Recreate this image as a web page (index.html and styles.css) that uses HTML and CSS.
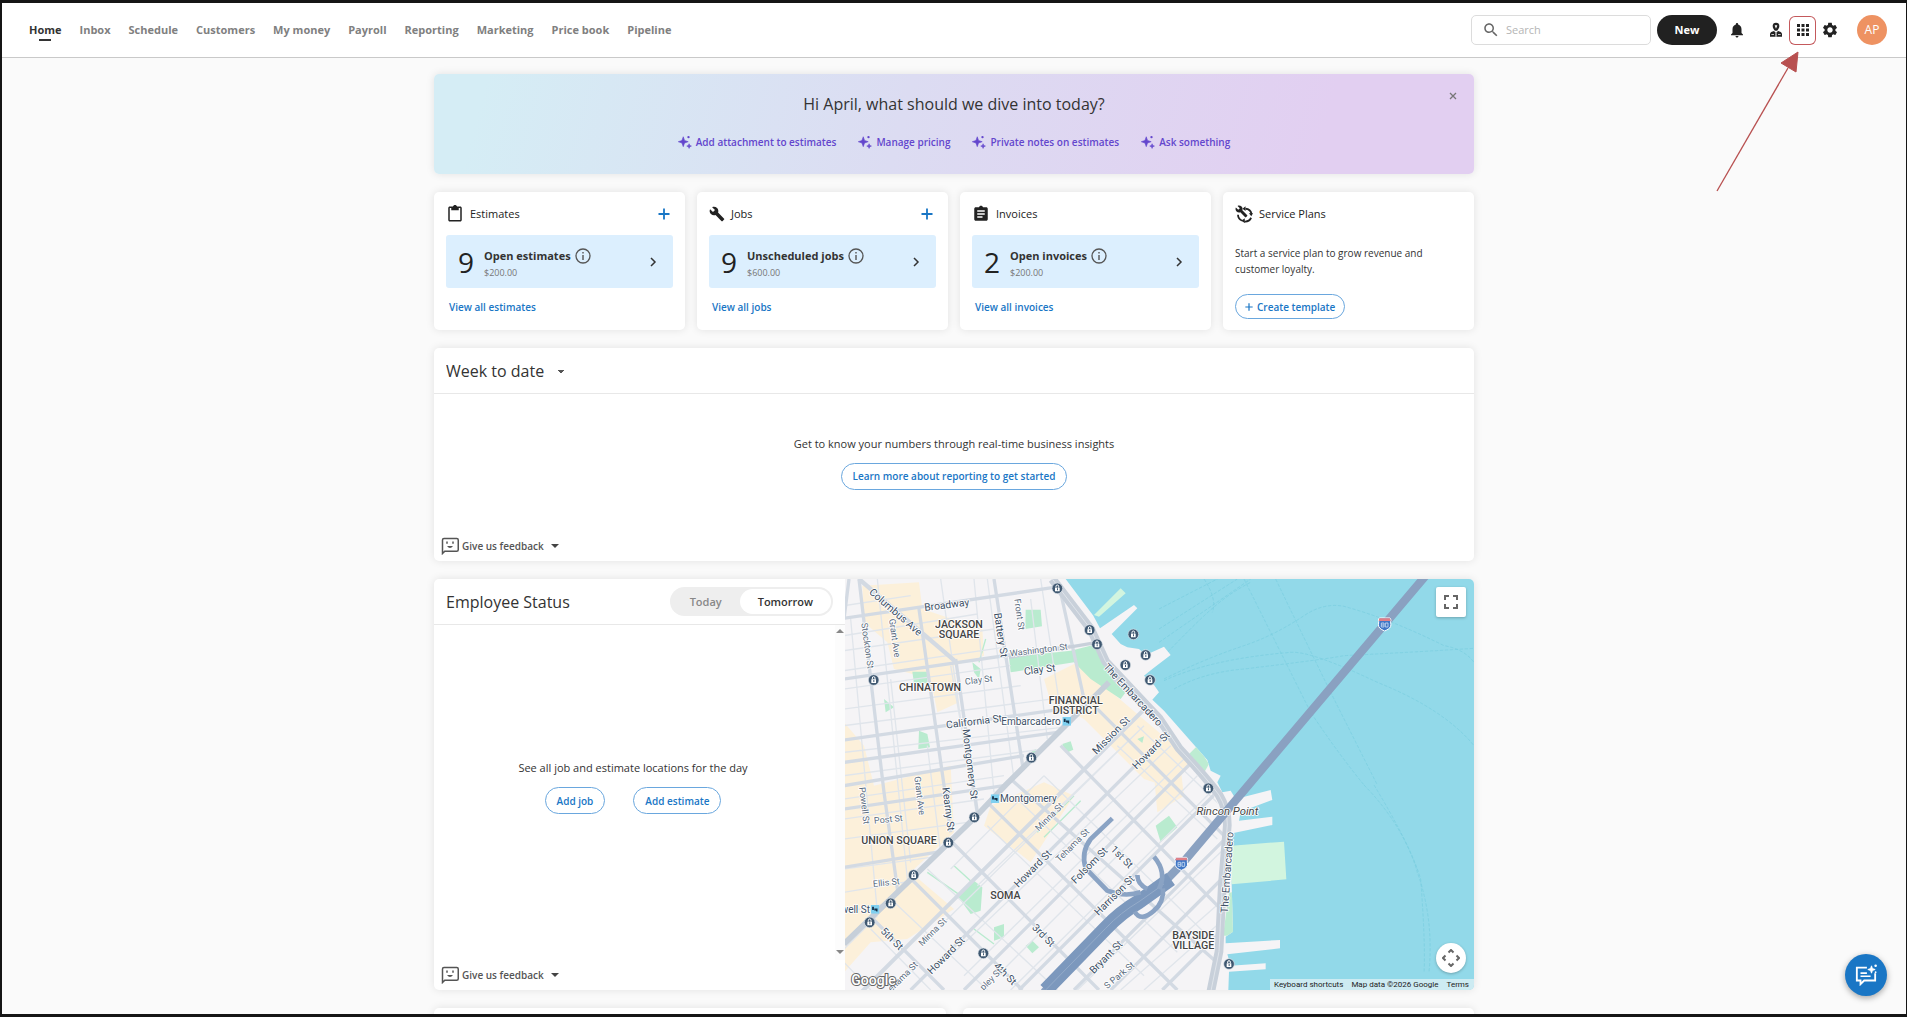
FILE: index.html
```html
<!DOCTYPE html>
<html lang="en">
<head>
<meta charset="utf-8">
<meta name="viewport" content="width=device-width, initial-scale=1">
<title>Home</title>
<link rel="stylesheet" href="styles.css">
</head>
<body>
<svg class="defs" aria-hidden="true">
  <symbol id="sparkle" viewBox="0 0 24 24"><path d="M9 3l2.200 6.300L17.500 11.500l-6.300 2.200L9 20l-2.200-6.300L.5 11.500l6.300-2.200z" stroke="currentColor"/><path d="M19 15l1 3 3 1-3 1-1 3-1-3-3-1 3-1z" stroke="currentColor"/><circle cx="18" cy="3.500" r="2"/></symbol>
  <symbol id="feedback" viewBox="0 0 24 24"><path d="M2 22V4a2 2 0 0 1 2-2h17a2 2 0 0 1 2 2v13a2 2 0 0 1-2 2H5z" fill="none" stroke="currentColor" stroke-width="2"/><path d="M7 6h2v3H7zM15 6h2v3h-2zM8 12h8q-4 5-8 0z"/></symbol>
  <symbol id="info" viewBox="0 0 16 16"><circle cx="8" cy="8" r="7" fill="none" stroke="currentColor" stroke-width="1.300"/><path d="M7.300 7h1.400v5H7.300zM7.300 4h1.400v1.500H7.300z"/></symbol>
  <symbol id="plus" viewBox="0 0 12 12"><path d="M6 .5v11M.5 6h11" stroke="currentColor" stroke-width="1.800"/></symbol>
  <symbol id="chevron" viewBox="0 0 12 12"><path d="M4 2l4 4-4 4" fill="none" stroke="currentColor" stroke-width="1.500"/></symbol>
  <symbol id="pin" viewBox="-18 -18 36 36"><circle r="16" fill="#3f5871" stroke="#dfe5ec" stroke-width="2"/><path d="M-7-2h14V9H-7z" fill="#fff"/><path d="M-4-2v-4a4 4 0 0 1 8 0v4" fill="none" stroke="#fff" stroke-width="3"/><path d="M-1 0h3v6h-3z" fill="#3f5871"/></symbol>
  <symbol id="shield" viewBox="0 0 44 44"><path d="M6 3h32l3 6c-3 6 1 12-1 19-3 8-12 11-18 14C16 39 7 36 4 28c-2-7 2-13-1-19z" fill="#3f76c6" stroke="#fff" stroke-width="3"/><path d="M6 4h32l2 8H4z" fill="#df7f88"/><path d="M12 18h8v12h-8zM12 24h8M24 18h8v12h-8z" fill="none" stroke="#b5cdec" stroke-width="3"/></symbol>
  <symbol id="transit" viewBox="0 0 24 24"><path d="M0 0h24v24H0z" fill="#7fd0f0"/><path d="M4 5h5v9H4zM10 10h9v8h-3l-2-3h-4z" fill="#16324a"/></symbol>
</svg>
<div class="app">
  <header class="topbar">
    <nav class="nav" aria-label="Main">
      <a class="nav-link active" href="#home" aria-current="page">Home</a>
      <a class="nav-link" href="#inbox">Inbox</a>
      <a class="nav-link" href="#schedule">Schedule</a>
      <a class="nav-link" href="#customers">Customers</a>
      <a class="nav-link" href="#money">My money</a>
      <a class="nav-link" href="#payroll">Payroll</a>
      <a class="nav-link" href="#reporting">Reporting</a>
      <a class="nav-link" href="#marketing">Marketing</a>
      <a class="nav-link" href="#pricebook">Price book</a>
      <a class="nav-link" href="#pipeline">Pipeline</a>
    </nav>
    <div class="tools">
      <label class="search">
        <svg class="icon-18" viewBox="0 0 24 24" aria-hidden="true"><path d="M15.500 14h-.79l-.28-.27C15.410 12.590 16 11.110 16 9.500 16 5.910 13.090 3 9.500 3S3 5.910 3 9.500 5.910 16 9.500 16c1.610 0 3.090-.59 4.230-1.570l.27.28v.79l5 4.990L20.490 19l-4.990-5zm-6 0C7.010 14 5 11.990 5 9.500S7.010 5 9.500 5 14 7.010 14 9.500 11.990 14 9.500 14z"/></svg>
        <input type="search" placeholder="Search" aria-label="Search">
      </label>
      <button class="new" type="button">New</button>
      <button class="icon-btn" type="button" aria-label="Notifications"><svg class="icon-18" viewBox="0 0 24 24"><path d="M12 22c1.100 0 2-.9 2-2h-4c0 1.100.89 2 2 2zm6-6v-5c0-3.070-1.640-5.640-4.500-6.320V4c0-.83-.67-1.500-1.500-1.500s-1.500.67-1.500 1.500v.68C7.630 5.360 6 7.920 6 11v5l-2 2v1h16v-1l-2-2z"/></svg></button>
      <div class="icon-group">
        <button class="icon-btn" type="button" aria-label="Technicians"><svg class="icon-16" viewBox="0 0 24 24"><path d="M12 1a5 5 0 0 1 5 5c0 3-2 6-3.500 7h-3C9 12 7 9 7 6a5 5 0 0 1 5-5z"/><path d="M10 5h4l-2 5z" fill="#fff"/><path d="M3 22v-4c0-2 3-4 6-4.500l3 3 3-3c3 .5 6 2.500 6 4.500v4z"/><path d="M11.200 16h1.600v6h-1.600zM5 18h4v1H5zM15 18h4v1h-4z" fill="#fff"/></svg></button>
        <div class="callout">
          <button class="icon-btn" type="button" aria-label="Apps"><svg class="icon-18" viewBox="0 0 24 24"><path d="M4 8h4V4H4v4zm6 12h4v-4h-4v4zm-6 0h4v-4H4v4zm0-6h4v-4H4v4zm6 0h4v-4h-4v4zm6-10v4h4V4h-4zm-6 4h4V4h-4v4zm6 6h4v-4h-4v4zm0 6h4v-4h-4v4z"/></svg></button>
          <svg class="arrow" viewBox="0 0 84 142" aria-hidden="true"><path d="M1 141L72 18" stroke="#b85050" stroke-width="1.300"/><path d="M82 2L65 13l15 9z" fill="#b85050" stroke="#b85050"/></svg>
        </div>
        <button class="icon-btn" type="button" aria-label="Settings"><svg class="icon-18" viewBox="0 0 24 24"><path d="M19.140 12.940c.04-.3.060-.61.060-.94 0-.32-.02-.64-.07-.94l2.030-1.580c.18-.14.230-.41.120-.61l-1.920-3.320c-.12-.22-.37-.29-.59-.22l-2.390.96c-.5-.38-1.030-.7-1.620-.94l-.36-2.540c-.04-.24-.24-.41-.48-.41h-3.840c-.24 0-.43.17-.47.41l-.36 2.540c-.59.240-1.130.57-1.620.94l-2.390-.96c-.22-.08-.47 0-.59.22L2.740 8.870c-.12.210-.08.470.120.610l2.030 1.580c-.05.3-.09.630-.09.940s.02.640.07.940l-2.030 1.580c-.18.140-.23.410-.12.610l1.920 3.320c.12.220.370.290.590.220l2.390-.96c.5.380 1.030.7 1.620.94l.36 2.540c.05.240.240.410.480.410h3.840c.24 0 .44-.17.470-.41l.36-2.540c.59-.24 1.130-.56 1.620-.94l2.390.96c.22.080.470 0 .59-.22l1.920-3.320c.12-.22.070-.47-.12-.61l-2.010-1.580zM12 15.600c-1.980 0-3.600-1.620-3.600-3.600s1.620-3.600 3.600-3.600 3.600 1.620 3.600 3.600-1.620 3.600-3.600 3.600z"/></svg></button>
      </div>
      <button class="avatar" type="button" aria-label="Account">AP</button>
    </div>
  </header>

  <main class="main">
    <section class="banner">
      <h1 class="title">Hi April, what should we dive into today?</h1>
      <div class="prompts">
        <button class="prompt" type="button"><svg class="icon-14" aria-hidden="true"><use href="#sparkle"/></svg>Add attachment to estimates</button>
        <button class="prompt" type="button"><svg class="icon-14" aria-hidden="true"><use href="#sparkle"/></svg>Manage pricing</button>
        <button class="prompt" type="button"><svg class="icon-14" aria-hidden="true"><use href="#sparkle"/></svg>Private notes on estimates</button>
        <button class="prompt" type="button"><svg class="icon-14" aria-hidden="true"><use href="#sparkle"/></svg>Ask something</button>
      </div>
      <button class="close" type="button" aria-label="Dismiss"><svg viewBox="0 0 8 8"><path d="M1 1l6 6M7 1L1 7" stroke="#777" stroke-width="1.300"/></svg></button>
    </section>

    <div class="cards">
      <section class="card">
        <div class="card-head">
          <svg class="icon-18" viewBox="0 0 24 24" aria-hidden="true"><path d="M19 2h-4.180C14.400.84 13.300 0 12 0c-1.300 0-2.400.84-2.820 2H5c-1.100 0-2 .9-2 2v16c0 1.100.9 2 2 2h14c1.100 0 2-.9 2-2V4c0-1.100-.9-2-2-2zm0 18H5V4h2v3h10V4h2v16z"/></svg>
          <h2 class="card-title">Estimates</h2>
          <button class="add" type="button" aria-label="New estimate"><svg class="icon-12"><use href="#plus"/></svg></button>
        </div>
        <a class="stat" href="#open-estimates"><span class="count">9</span><span class="stat-text"><span class="stat-name">Open estimates <svg class="icon-16" aria-hidden="true"><use href="#info"/></svg></span><span class="amount">$200.00</span></span><svg class="icon-12" aria-hidden="true"><use href="#chevron"/></svg></a>
        <a class="more" href="#estimates">View all estimates</a>
      </section>
      <section class="card">
        <div class="card-head">
          <svg class="icon-16" viewBox="0 0 24 24" aria-hidden="true"><path d="M22.700 19l-9.100-9.100c.9-2.300.4-5-1.500-6.900-2-2-5-2.400-7.400-1.300L9 6 6 9 1.600 4.700C.4 7.100.9 10.100 2.900 12.100c1.900 1.900 4.600 2.400 6.900 1.500l9.100 9.100c.4.4 1 .4 1.400 0l2.300-2.300c.5-.4.5-1.100.1-1.400z"/></svg>
          <h2 class="card-title">Jobs</h2>
          <button class="add" type="button" aria-label="New job"><svg class="icon-12"><use href="#plus"/></svg></button>
        </div>
        <a class="stat" href="#unscheduled"><span class="count">9</span><span class="stat-text"><span class="stat-name">Unscheduled jobs <svg class="icon-16" aria-hidden="true"><use href="#info"/></svg></span><span class="amount">$600.00</span></span><svg class="icon-12" aria-hidden="true"><use href="#chevron"/></svg></a>
        <a class="more" href="#jobs">View all jobs</a>
      </section>
      <section class="card">
        <div class="card-head">
          <svg class="icon-18" viewBox="0 0 24 24" aria-hidden="true"><path d="M19 3h-4.180C14.400 1.840 13.300 1 12 1c-1.300 0-2.400.84-2.820 2H5c-1.100 0-2 .9-2 2v14c0 1.100.9 2 2 2h14c1.100 0 2-.9 2-2V5c0-1.100-.9-2-2-2zm-5 14H7v-2h7v2zm3-4H7v-2h10v2zm0-4H7V7h10v2z"/></svg>
          <h2 class="card-title">Invoices</h2>
        </div>
        <a class="stat" href="#open-invoices"><span class="count">2</span><span class="stat-text"><span class="stat-name">Open invoices <svg class="icon-16" aria-hidden="true"><use href="#info"/></svg></span><span class="amount">$200.00</span></span><svg class="icon-12" aria-hidden="true"><use href="#chevron"/></svg></a>
        <a class="more" href="#invoices">View all invoices</a>
      </section>
      <section class="card">
        <div class="card-head">
          <svg class="icon-18" viewBox="0 0 24 24" aria-hidden="true"><path transform="scale(.72)" d="M22.700 19l-9.100-9.100c.9-2.300.4-5-1.500-6.900-2-2-5-2.400-7.400-1.300L9 6 6 9 1.600 4.700C.4 7.100.9 10.100 2.900 12.100c1.900 1.900 4.600 2.400 6.900 1.500l9.100 9.100c.4.4 1 .4 1.400 0l2.300-2.300c.5-.4.5-1.100.1-1.400z"/><path d="M14 5a8.500 8.500 0 0 1 8 7M4 13a8.500 8.500 0 0 0 6 8M12.500 22a9 9 0 0 0 9-5" fill="none" stroke="currentColor" stroke-width="2.400"/><path d="M18.500 11H24l-2.300 4zM14 1.500v6.500l-4-3zM13 17.500V24l-4.500-3z"/></svg>
          <h2 class="card-title">Service Plans</h2>
        </div>
        <p class="blurb">Start a service plan to grow revenue and customer loyalty.</p>
        <button class="pill template" type="button"><svg class="icon-8" aria-hidden="true"><use href="#plus"/></svg>Create template</button>
      </section>
    </div>

    <section class="panel week">
      <div class="panel-head">
        <select class="range title" aria-label="Reporting period"><option>Week to date</option></select>
      </div>
      <div class="empty">
        <p>Get to know your numbers through real-time business insights</p>
        <button class="pill" type="button">Learn more about reporting to get started</button>
      </div>
      <button class="feedback" type="button"><svg class="icon-18" aria-hidden="true"><use href="#feedback"/></svg>Give us feedback<span class="caret"></span></button>
    </section>

    <section class="panel status">
      <div class="status-side">
        <div class="panel-head">
          <h2 class="title">Employee Status</h2>
          <div class="toggle" role="group" aria-label="Day">
            <button type="button" aria-pressed="false">Today</button>
            <button type="button" aria-pressed="true">Tomorrow</button>
          </div>
        </div>
        <div class="status-body">
          <div class="empty">
            <p>See all job and estimate locations for the day</p>
            <div class="actions"><button class="pill" type="button">Add job</button><button class="pill" type="button">Add estimate</button></div>
          </div>
          <div class="scrollbar" aria-hidden="true"><span class="up"></span><span class="down"></span></div>
        </div>
        <button class="feedback" type="button"><svg class="icon-18" aria-hidden="true"><use href="#feedback"/></svg>Give us feedback<span class="caret"></span></button>
      </div>
      <div class="map">
        <svg class="map-art" viewBox="0 0 1890 1233" preserveAspectRatio="xMaxYMid slice" role="img" aria-label="Map of downtown San Francisco">
          <defs>
            <path id="land" d="M0 0H665L748 110 768 148 870 78 880 88 803 165 830 195 850 205 885 210 905 228 960 203 980 228 925 270 900 290 930 318 945 340 925 362 960 395 1090 543 1100 575 1130 590 1120 610 1135 640 1160 635 1175 660 1280 633 1285 663 1190 698 1185 725 1285 713 1285 738 1165 763 1163 916 1167 1058 1145 1073 1145 1093 1308 1083 1308 1108 1150 1126 1160 1160 1265 1153 1265 1171 1155 1178 1153 1233H0z"/>
            <clipPath id="land-clip"><use href="#land"/></clipPath>
            <clipPath id="north"><path d="M0 0H625L785 248 790 315 485 618 395 713 0 1090z"/></clipPath>
            <clipPath id="soma"><path d="M790 320L810 290 945 418 1095 618 1150 738 1125 1118 1105 1233H0V1105L395 713z"/></clipPath>
          </defs>
          <rect width="1890" height="1233" fill="#92d9e9"/>
          <g class="ferry">
            <path d="M945 90L1120 0M945 150L1180 0M945 190L1220 0M950 240C1060 130 1120 60 1220 10M1080 0Q1120 60 1105 100M960 300Q1080 240 1200 200 1290 170 1380 110 1440 70 1500 82 1640 120 1800 200 1860 210 1890 250M960 305Q1100 240 1340 220 1400 215 1600 310 1800 390 1890 500M990 330Q1080 280 1200 270 1450 240 1500 230 1700 220 1890 208M1200 0Q1350 300 1400 400 1480 520 1560 618M1295 0Q1420 260 1480 380L1600 618M1560 618Q1680 740 1730 900 1745 1100 1740 1180M1590 618Q1700 800 1720 880 1770 1020 1755 1180"/>
          </g>
          <use href="#land" fill="#f5f4f6"/>
          <path d="M750 108L830 28 845 43 765 113zM1163 800L1320 788 1327 901 1163 916z" fill="#d2f5df"/>
          <g clip-path="url(#land-clip)">
            <g fill="#fcf0da">
              <path d="M55 20L225 10 235 90 415 150 420 230 330 260 345 370 280 400 260 300 150 270 130 190 60 130zM600 300L720 240 780 320 980 490 1040 560 975 625 900 600 720 420 620 370zM0 430L60 500 90 620 320 560 330 760 200 880 330 990 190 1080 80 1090 0 1180zM440 680L600 610 690 650 560 850 420 740zM930 590L1010 570 1020 650 940 700z"/>
            </g>
            <path d="M1060 500L1095 555 1075 590 1030 530zM1155 940h12v130h-30z" fill="#bdecd2"/>
            <g fill="#b9ebcf">
              <path d="M495 235L680 215 760 195 775 240 845 340 830 360 740 300 690 250 500 280zM545 92h45l4 50-50 8zM205 278h45v35h-40zM225 455l25 10 8 40-35 5zM120 360l30 25-25 15zM385 250l25 20-5 30-15-20zM655 495l25-8 8 25-22 10zM340 950l50-45 25 20-5 70-30 10zM450 1045l30-10v40l-30 10zM545 1100l20-15 20 20-20 18zM935 740l40-30 25 35-50 45zM880 480l20-8-5 20zM560 520l15-10 5 15z"/>
              <path d="M425 180l-20 70M250 880l100 70M330 860l60 55M390 1050l60 45" stroke="#b9ebcf" stroke-width="4"/>
              <path d="M580 760l110-110M600 775l110-110" stroke="#b9ebcf" stroke-width="4"/>
            </g>
            <g class="minor" clip-path="url(#north)">
              <path d="M0 80L200 50M0 170L400 105M0 215L450 150M0 275L480 205M0 330L500 260M0 390L530 320M0 440L700 350M0 520L700 440M0 590L600 510M0 660L480 590M0 720L420 660M0 780L370 730M0 870L300 830M0 940L240 900M0 1000L200 960M20 120L100 1000M100 0L190 900M290 0L370 560M390 0L450 640M430 0L510 600M560 60L610 480M590 0L650 400M140 300L200 850M250 500L290 820M320 260L400 720"/>
            </g>
            <g class="minor" clip-path="url(#soma)">
              <path d="M320 870L600 590M400 920L880 460M290 1040L900 440M300 1150L980 500M360 1190L1030 530M460 1190L1060 590M500 1233L1100 640M700 1233L1150 800M830 1233L1140 960M900 1233L1140 1020M130 950L430 1233M250 870L640 1233M430 740L900 1190M520 660L1000 1120M600 590L1080 1060M820 500L1120 780M880 440L1130 680M80 1050L260 1233M0 1150L80 1233M0 1110L100 1010"/>
            </g>
            <g class="road" clip-path="url(#north)">
              <path d="M0 118L625 26M0 300L690 200M0 483L690 385M0 550L640 460M0 620L540 530M0 690L480 620M0 865L400 800M45 0L120 640 170 1000M225 90L320 760M335 240L400 700M450 0L545 620M650 40L720 360M0 120L15 0"/>
              <path d="M45 0L335 248" stroke-width="13"/>
            </g>
            <g class="road" clip-path="url(#soma)">
              <path d="M0 1290L1290 0M200 1233L1000 433M60 1233L900 393M360 1233L1130 463M525 1233L1140 618M690 1233L1160 763M800 1233L1170 863M955 1233L1180 1008M0 933L300 1233M190 888L535 1233M300 765L765 1233M400 640L1000 1233M500 600L1130 1160M650 500L1140 1000M750 380L1140 770M810 300L1150 640"/>
            </g>
            <path d="M0 1095L395 713 485 618 795 310" class="market"/>
            <path d="M625 0L740 150 785 248 945 418 1005 508Q1090 600 1125 648 1150 690 1150 738L1135 918 1125 1118 1100 1240" fill="none" stroke="#c8d0da" stroke-width="26"/>
            <path d="M625 0L740 150 785 248 945 418 1005 508Q1090 600 1125 648 1150 690 1150 738L1135 918 1125 1118 1100 1240" fill="none" stroke="#dfe4ea" stroke-width="3"/>
            <path d="M495 235L760 190" stroke="#c8d0da" stroke-width="10"/>
          </g>
          <path d="M1745 -10L1015 853 945 925 885 968Q830 1000 785 1048L600 1240" fill="none" stroke="#8aa1c1" stroke-width="25"/>
          <path d="M980 900L885 968Q830 1000 785 1048L605 1233" fill="none" stroke="#7c98bd" stroke-width="44"/>
          <path d="M960 915L885 968Q830 1000 785 1048L605 1233" fill="none" stroke="#94abc9" stroke-width="3"/>
          <path d="M805 718L740 780Q710 820 725 868L790 935Q840 955 890 940M930 833Q970 880 945 930M880 888Q880 915 910 930M957 928Q960 970 930 995 890 1030 872 998" fill="none" stroke="#8aa3c4" stroke-width="14"/>
          <g><use href="#pin" x="622" y="10" width="36" height="36"/><use href="#pin" x="719" y="135" width="36" height="36"/><use href="#pin" x="741" y="178" width="36" height="36"/><use href="#pin" x="850" y="148" width="36" height="36"/><use href="#pin" x="887" y="210" width="36" height="36"/><use href="#pin" x="826" y="240" width="36" height="36"/><use href="#pin" x="900" y="285" width="36" height="36"/><use href="#pin" x="71" y="285" width="36" height="36"/><use href="#pin" x="544" y="518" width="36" height="36"/><use href="#pin" x="373" y="697" width="36" height="36"/><use href="#pin" x="295" y="773" width="36" height="36"/><use href="#pin" x="191" y="870" width="36" height="36"/><use href="#pin" x="122" y="955" width="36" height="36"/><use href="#pin" x="59" y="1012" width="36" height="36"/><use href="#pin" x="400" y="1105" width="36" height="36"/><use href="#pin" x="1075" y="610" width="36" height="36"/><use href="#pin" x="1137" y="1137" width="36" height="36"/></g>
          <use href="#shield" x="1600" y="114" width="44" height="44"/><use href="#shield" x="990" y="832" width="44" height="44"/>
          <use href="#transit" x="655" y="414" width="26" height="26"/><use href="#transit" x="440" y="646" width="26" height="26"/><use href="#transit" x="80" y="978" width="26" height="26"/>
          <g class="street">
            <text transform="translate(156 98) rotate(41)" y="12">Columbus Ave</text>
            <text transform="translate(308 76) rotate(-7)" y="12">Broadway</text>
            <text transform="translate(472 168) rotate(81)" y="12">Battery St</text>
            <text transform="translate(587 270) rotate(-7)" y="12">Clay St</text>
            <text transform="translate(390 426) rotate(-7)" y="12">California St</text>
            <text transform="translate(380 555) rotate(83)" y="12">Montgomery St</text>
            <text transform="translate(868 346) rotate(47)" y="12">The Embarcadero</text>
            <text transform="translate(800 468) rotate(-45)" y="12">Mission St</text>
            <text transform="translate(920 513) rotate(-45)" y="12">Howard St</text>
            <text transform="translate(315 690) rotate(83)" y="12">Kearny St</text>
            <text transform="translate(565 868) rotate(-45)" y="12">Howard St</text>
            <text transform="translate(735 858) rotate(-45)" y="12">Folsom St</text>
            <text transform="translate(835 833) rotate(45)" y="12">1st St</text>
            <text transform="translate(810 948) rotate(-45)" y="12">Harrison St</text>
            <text transform="translate(600 1068) rotate(45)" y="12">3rd St</text>
            <text transform="translate(485 1183) rotate(45)" y="12">4th St</text>
            <text transform="translate(145 1078) rotate(45)" y="12">5th St</text>
            <text transform="translate(305 1128) rotate(-45)" y="12">Howard St</text>
            <text transform="translate(785 1133) rotate(-45)" y="12">Bryant St</text>
            <text transform="translate(1148 880) rotate(-86)" y="12">The Embarcadero</text>
          </g>
          <g class="street lesser">
            <text transform="translate(71 200) rotate(82)" y="10">Stockton St</text>
            <text transform="translate(153 177) rotate(82)" y="10">Grant Ave</text>
            <text transform="translate(527 106) rotate(82)" y="10">Front St</text>
            <text transform="translate(584 212) rotate(-7)" y="10">Washington St</text>
            <text transform="translate(404 302) rotate(-7)" y="10">Clay St</text>
            <text transform="translate(62 680) rotate(83)" y="10">Powell St</text>
            <text transform="translate(228 650) rotate(83)" y="10">Grant Ave</text>
            <text transform="translate(133 720) rotate(-6)" y="10">Post St</text>
            <text transform="translate(127 910) rotate(-6)" y="10">Ellis St</text>
            <text transform="translate(615 713) rotate(-45)" y="10">Minna St</text>
            <text transform="translate(685 798) rotate(-45)" y="10">Tehama St</text>
            <text transform="translate(265 1058) rotate(-45)" y="10">Minna St</text>
            <text transform="translate(825 1188) rotate(-40)" y="10">S Park St</text>
            <text transform="translate(176 1192) rotate(-45)" y="10">ehama St</text>
            <text transform="translate(440 1200) rotate(-45)" y="10">pley St</text>
          </g>
          <g class="street station">
            <text x="650" y="438" text-anchor="end">Embarcadero</text>
            <text x="468" y="670" text-anchor="start">Montgomery</text>
            <text x="78" y="1001" text-anchor="end">well St</text>
          </g>
          <text class="point" x="1150" y="708">Rincon Point</text>
          <g class="area">
            <text x="345" y="148">JACKSON</text><text x="345" y="178">SQUARE</text>
            <text x="258" y="336">CHINATOWN</text>
            <text x="695" y="374">FINANCIAL</text><text x="695" y="404">DISTRICT</text>
            <text x="165" y="794">UNION SQUARE</text>
            <text x="484" y="960">SOMA</text>
            <text x="1048" y="1080">BAYSIDE</text><text x="1048" y="1110">VILLAGE</text>
          </g>
          <text class="logo" x="22" y="1218">Google</text>
        </svg>
        <button class="map-btn fullscreen" type="button" aria-label="Toggle fullscreen"><svg viewBox="0 0 14 14"><path d="M1 5V1h4M9 1h4v4M13 9v4H9M5 13H1V9" fill="none" stroke="#666" stroke-width="2"/></svg></button>
        <button class="map-btn pan" type="button" aria-label="Map camera controls"><svg viewBox="0 0 18 18"><path d="M6.500 3.500L9 1l2.500 2.500M6.500 14.500L9 17l2.500-2.500M3.500 6.500L1 9l2.500 2.500M14.500 6.500L17 9l-2.500 2.500" fill="none" stroke="#666" stroke-width="2"/></svg></button>
        <div class="legal"><button type="button">Keyboard shortcuts</button><span>Map data ©2026 Google</span><a href="#terms">Terms</a></div>
      </div>
    </section>

    <div class="next-row"><section class="panel"></section><section class="panel"></section></div>
  </main>

  <button class="chat" type="button" aria-label="Chat"><svg viewBox="0 0 24 24"><path d="M13 4H2v14h4v4l4-4h12v-8" fill="none" stroke="currentColor" stroke-width="2"/><path d="M6 9h7v1.800H6zM6 12.500h11v1.800H6z"/><path d="M18 2l1 3 3 1-3 1-1 3-1-3-3-1 3-1z" stroke="currentColor"/><circle cx="22.500" cy="2" r="1.400"/><circle cx="22.500" cy="9" r="1"/></svg></button>
</div>
</body>
</html>
```
FILE: styles.css
```css
* { box-sizing: border-box; }

body {
  margin: 0;
  background: #111;
  color: #333;
  font: 12px/16px "Open Sans", "Noto Sans", sans-serif;
}

h1, h2, p { margin: 0; font-weight: 400; }
a { color: inherit; text-decoration: none; }
button, input, select { font: inherit; color: inherit; }
button { padding: 0; border: 0; background: none; cursor: pointer; }
svg { display: block; flex: none; fill: currentColor; }

.defs { position: absolute; width: 0; height: 0; }
.icon-8 { width: 8px; height: 8px; }
.icon-12 { width: 12px; height: 12px; }
.icon-14 { width: 14px; height: 14px; }
.icon-16 { width: 16px; height: 16px; }
.icon-18 { width: 18px; height: 18px; }

.app {
  display: flex;
  flex-direction: column;
  height: 100vh;
  overflow: hidden;
  border: solid #151515;
  border-width: 3px 1px 3px 2px;
  background: #fafafa;
}

/* Top bar */
.topbar {
  display: flex;
  flex: none;
  align-items: center;
  justify-content: space-between;
  height: 55px;
  padding: 0 19px 0 27px;
  border-bottom: 1px solid #c9c9c9;
  background: #fff;
}
.nav { display: flex; gap: 18px; }
.nav-link { position: relative; color: #808080; font-size: 11px; font-weight: 700; }
.nav-link.active { color: #333; }
.nav-link.active::after {
  content: "";
  position: absolute;
  bottom: -3px;
  left: 50%;
  width: 12px;
  height: 2px;
  margin-left: -6px;
  background: #333;
}
.tools { display: flex; align-items: center; gap: 6px; }
.search {
  display: flex;
  align-items: center;
  gap: 6px;
  width: 180px;
  height: 30px;
  padding: 0 10px;
  border: 1px solid #dcdcdc;
  border-radius: 5px;
  color: #666;
}
.search input { width: 100%; min-width: 0; padding: 0; border: 0; outline: 0; background: none; font-size: 11px; }
.search input::placeholder { color: #b5b5b5; }
.new { width: 60px; height: 30px; border-radius: 15px; background: #212121; color: #fff; font-size: 11px; font-weight: 700; }
.icon-btn { display: grid; place-items: center; width: 27px; height: 29px; color: #222; }
.icon-group { display: flex; margin: 0 8px 0 6px; }
.avatar { width: 30px; height: 30px; border-radius: 50%; background: #ee9262; color: #fff; }
.callout { position: relative; border-radius: 6px; box-shadow: 0 0 0 1px #c4595c inset; }
.arrow { position: absolute; top: 34px; right: 16px; z-index: 2; width: 84px; height: 142px; }

/* Page column */
.main {
  display: flex;
  flex: none;
  flex-direction: column;
  gap: 18px;
  width: 100%;
  max-width: 1040px;
  margin: 16px auto 0;
}
.title { color: #333; font-size: 16px; line-height: 20px; }
.banner, .card, .panel { border-radius: 5px; background: #fff; box-shadow: 0 0 8px rgba(0, 0, 0, .1); }
.banner {
  position: relative;
  display: flex;
  flex-direction: column;
  align-items: center;
  gap: 21px;
  padding: 20px 0 25px;
  background: linear-gradient(105deg, #d5edf5 5%, #dcdcf2 45%, #e2cff1 85%);
}
.prompts { display: flex; gap: 22px; }
.prompt { display: flex; align-items: center; gap: 4px; height: 14px; color: #6346cd; font-size: 10px; font-weight: 600; }
.close { position: absolute; top: 18px; right: 17px; }
.close svg { width: 8px; height: 8px; }

/* Summary cards */
.cards { display: grid; grid-template-columns: repeat(4, 1fr); gap: 12px; }
.card { display: flex; flex-direction: column; align-items: flex-start; padding: 12px 12px 11px; }
.card-head { display: flex; align-items: center; gap: 6px; width: 100%; height: 20px; color: #222; }
.card-title { flex: 1; font-size: 11px; }
.add { margin-right: 3px; color: #1976c5; }
.stat {
  display: flex;
  align-items: center;
  gap: 10px;
  width: 100%;
  height: 53px;
  margin: 11px 0;
  padding: 0 14px 0 12px;
  border-radius: 3px;
  background: #dceffe;
}
.count { color: #222; font-size: 28px; line-height: 32px; }
.stat-text { display: flex; flex: 1; flex-direction: column; padding-top: 4px; }
.stat-name { display: flex; align-items: center; gap: 4px; height: 18px; font-size: 11px; font-weight: 700; color: #333; }
.stat-name svg { color: #555; }
.amount { color: #777; font-size: 9px; }
.more { padding-left: 3px; color: #1976c5; font-size: 10px; font-weight: 600; }
.blurb { margin-top: 21px; font-size: 10px; }

.pill {
  display: flex;
  align-items: center;
  gap: 4px;
  height: 27px;
  padding: 0 11px;
  border: 1px solid #6aa7de;
  border-radius: 14px;
  color: #1976c5;
  font-size: 10px;
  font-weight: 600;
}
.template { height: 25px; margin-top: 17px; padding: 0 9px; }

/* Panels */
.panel-head {
  display: flex;
  flex: none;
  align-items: center;
  justify-content: space-between;
  height: 46px;
  padding: 0 12px;
  border-bottom: 1px solid #e8e8e8;
}
.range {
  padding: 0 20px 0 0;
  border: 0;
  outline: 0;
  appearance: none;
  background: linear-gradient(to bottom right, #555 50%, transparent 50%) right 0 top 9px / 4px 4px no-repeat,
    linear-gradient(to bottom left, #555 50%, transparent 50%) right 4px top 9px / 4px 4px no-repeat;
}
.empty { display: flex; flex: 1; flex-direction: column; align-items: center; justify-content: center; gap: 11px; }
.empty p { font-size: 11px; }
.feedback { display: flex; align-items: center; align-self: flex-start; gap: 3px; height: 30px; padding-left: 7px; color: #555; font-size: 10px; font-weight: 600; }
.caret { margin-left: 4px; border: 4px solid transparent; border-top-color: #444; border-bottom: 0; }
.week { display: flex; flex-direction: column; height: 213px; }

/* Employee status */
.status { display: flex; height: 411px; overflow: hidden; }
.status-side { display: flex; flex: 411; flex-direction: column; min-width: 0; }
.toggle { display: flex; padding: 2px; border-radius: 15px; background: #eee; }
.toggle button { height: 25px; padding: 0 18px; border-radius: 13px; color: #888; font-size: 11px; font-weight: 600; }
.toggle button[aria-pressed="true"] { background: #fff; color: #333; }
.status-body { display: flex; flex: 1; }
.status-body .empty { padding: 0 3px 11px 0; }
.actions { display: flex; gap: 28px; }
.scrollbar { display: flex; flex-direction: column; justify-content: space-between; width: 10px; padding: 4px 1px 6px; background: #fcfcfc; }
.up, .down { border: 4px solid transparent; }
.up { border-top: 0; border-bottom-color: #888; }
.down { border-bottom: 0; border-top-color: #888; }

/* Map */
.map { position: relative; flex: 629; min-width: 0; overflow: hidden; font-family: Roboto, sans-serif; }
.map-art { width: 100%; height: 100%; }
.ferry { fill: none; stroke: #78cde0; stroke-width: 2; stroke-dasharray: 10 5; }
.minor { fill: none; stroke: #e0e5eb; stroke-width: 4; }
.road { fill: none; stroke: #d3dae3; stroke-width: 10; }
.market { fill: none; stroke: #c6cfd9; stroke-width: 17; }
.street, .area, .point { fill: #3d5066; stroke: #fff; stroke-width: 5px; stroke-linejoin: round; paint-order: stroke; text-anchor: middle; font-size: 31px; }
.lesser { fill: #5b6c80; font-size: 27px; }
.station { font-size: 30px; }
.area { fill: #444; font-size: 32px; font-weight: 500; }
.point { fill: #444; font-size: 34px; font-style: italic; }
.station text[text-anchor="end"] { text-anchor: end; }
.station text[text-anchor="start"] { text-anchor: start; }
.logo { fill: #fff; stroke: #666; stroke-width: 6px; paint-order: stroke; font-size: 42px; font-weight: 500; }
.map-btn { position: absolute; right: 8px; display: grid; place-items: center; width: 30px; height: 30px; background: #fff; box-shadow: 0 1px 3px rgba(0, 0, 0, .25); }
.fullscreen { top: 8px; border-radius: 2px; }
.fullscreen svg { width: 14px; height: 14px; }
.pan { bottom: 17px; border-radius: 50%; }
.pan svg { width: 18px; height: 18px; }
.legal { position: absolute; right: 0; bottom: 0; display: flex; gap: 8px; padding: 0 5px 0 4px; background: #cdebf2; color: #222; font-size: 8px; line-height: 11px; }

.next-row { display: grid; grid-template-columns: 1fr 1fr; gap: 17px; }
.next-row .panel { height: 200px; }

.chat {
  position: absolute;
  right: 20px;
  bottom: 21px;
  display: grid;
  place-items: center;
  width: 42px;
  height: 42px;
  border-radius: 50%;
  background: #1976c5;
  box-shadow: 0 2px 6px rgba(0, 0, 0, .35);
  color: #fff;
}
.chat svg { width: 22px; height: 22px; }
```
